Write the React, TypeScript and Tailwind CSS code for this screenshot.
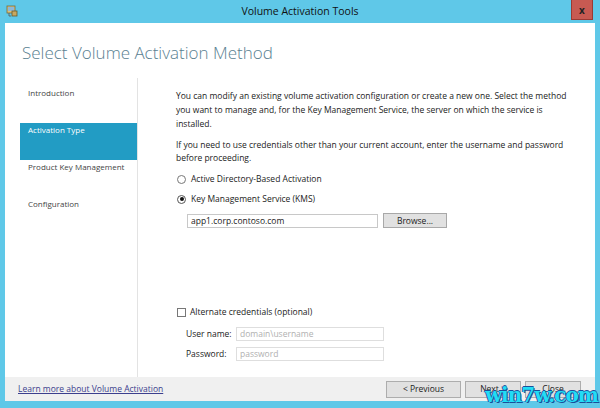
import React from "react";

function AppIcon() {
  return (
    <svg width="13" height="13" viewBox="0 0 13 13">
      <rect x="1" y="2" width="8" height="7" fill="#d9c27a" stroke="#7a6a3a" strokeWidth="0.8" />
      <rect x="2" y="3" width="6" height="4" fill="#8fb8d8" />
      <rect x="6" y="7" width="5" height="5" fill="#c8a860" stroke="#6a5a2a" strokeWidth="0.8" />
      <path d="M3 9 L3 12 L5 12" stroke="#555" strokeWidth="0.8" fill="none" />
    </svg>
  );
}

export default function App() {
  const font = { fontFamily: '"Open Sans", "Noto Sans", Arial, sans-serif' };
  return (
    <div
      className="relative w-[600px] h-[408px] bg-[#5fc8e8] flex flex-col overflow-hidden text-[#222]"
      style={font}
    >
      {/* Title bar */}
      <div className="relative h-[23px] flex items-center justify-center shrink-0">
        <div className="absolute left-[6px] top-[4px]">
          <AppIcon />
        </div>
        <span className="text-[10.5px] text-[#111] leading-none">Volume Activation Tools</span>
        <div className="absolute right-[7px] top-0 w-[22px] h-[20px] bg-[#c75a52] border border-[#9a3a34] border-t-0 flex items-center justify-center">
          <span className="text-[10px] font-bold text-[#222] leading-none">x</span>
        </div>
      </div>

      {/* Window body */}
      <div className="mx-[5px] h-[378px] bg-white flex flex-col shrink-0">
        <div className="h-[55px] pl-[17px] pt-[17px] shrink-0">
          <h1 className="text-[17px] font-light leading-[26px] text-[#5a8191]">
            Select Volume Activation Method
          </h1>
        </div>

        <div className="flex flex-1 min-h-0">
          {/* Nav */}
          <div className="w-[133px] border-r border-[#e3e3e3] pl-[15px] pt-[8px] shrink-0 text-[8px] leading-[14px]">
            <div className="h-[37px] pl-[8px] text-[#444]">Introduction</div>
            <div className="h-[37px] pl-[8px] bg-[#229cc4] text-white">Activation Type</div>
            <div className="h-[37px] pl-[8px] text-[#444]">Product Key Management</div>
            <div className="h-[37px] pl-[8px] text-[#444]">Configuration</div>
          </div>

          {/* Content */}
          <div className="flex-1 pl-[38px] pr-[20px] pt-[11px] text-[8.5px] leading-[14px] text-[#222]">
            <p className="w-[400px]">
              You can modify an existing volume activation configuration or create a new one. Select the method
              you want to manage and, for the Key Management Service, the server on which the service is
              installed.
            </p>
            <p className="mt-[7px] leading-[13px] w-[400px]">
              If you need to use credentials other than your current account, enter the username and password
              before proceeding.
            </p>

            <div className="mt-[8px] flex items-center h-[14px]">
              <span className="w-[9px] h-[9px] rounded-full border border-[#777] bg-white ml-[1px]" />
              <span className="ml-[5px]">Active Directory-Based Activation</span>
            </div>
            <div className="mt-[6px] flex items-center h-[14px]">
              <span className="w-[9px] h-[9px] rounded-full border border-[#555] bg-white ml-[1px] flex items-center justify-center">
                <span className="w-[4px] h-[4px] rounded-full bg-[#111]" />
              </span>
              <span className="ml-[5px]">Key Management Service (KMS)</span>
            </div>

            <div className="mt-[7px] flex items-center ml-[11px]">
              <div className="w-[191px] h-[14px] border border-[#c8c8c8] flex items-center pl-[3px]">
                app1.corp.contoso.com
              </div>
              <div className="ml-[5px] w-[64px] h-[15px] bg-[#e1e1e1] border border-[#a8a8a8] flex items-center justify-center">
                Browse...
              </div>
            </div>

            <div className="mt-[79px] flex items-center h-[10px]">
              <span className="w-[9px] h-[9px] border border-[#777] bg-white ml-[1px]" />
              <span className="ml-[4px]">Alternate credentials (optional)</span>
            </div>

            <div className="mt-[10px] ml-[10px] flex items-center h-[14px]">
              <span className="w-[50px]">User name:</span>
              <div className="w-[148px] h-[14px] border border-[#dedede] flex items-center pl-[3px] text-[#b0b0b0]">
                domain\username
              </div>
            </div>
            <div className="mt-[6px] ml-[10px] flex items-center h-[14px]">
              <span className="w-[50px]">Password:</span>
              <div className="w-[148px] h-[14px] border border-[#dedede] flex items-center pl-[3px] text-[#b0b0b0]">
                password
              </div>
            </div>
          </div>
        </div>

        {/* Footer */}
        <div className="h-[24px] bg-[#f0f0f0] flex items-center shrink-0 pl-[13px] pr-[14px] text-[8.5px]">
          <span className="text-[#3c3f8e] underline">Learn more about Volume Activation</span>
          <div className="ml-auto flex items-center gap-[4px]">
            <div className="w-[75px] h-[17px] bg-[#e1e1e1] border border-[#adadad] flex items-center justify-center text-[#222]">
              &lt; Previous
            </div>
            <div className="w-[56px] h-[17px] bg-[#e1e1e1] border border-[#adadad] flex items-center justify-center text-[#222]">
              Next &gt;
            </div>
            <div className="w-[56px] h-[17px] bg-[#e1e1e1] border border-[#adadad] flex items-center justify-center text-[#222]">
              Close
            </div>
          </div>
        </div>
      </div>

      {/* Watermark */}
      <div
        className="absolute right-[2px] bottom-[3px] text-[20px] font-bold leading-none text-[#22dcf5]"
        style={{
          fontFamily: '"DejaVu Serif", "Liberation Serif", serif',
          textShadow: "1px 1px 0 #1a4f9a, -1px 0 0 #1a4f9a, 0 -1px 0 #1a4f9a",
          letterSpacing: "-1px",
        }}
      >
        win7w.com
      </div>
    </div>
  );
}
